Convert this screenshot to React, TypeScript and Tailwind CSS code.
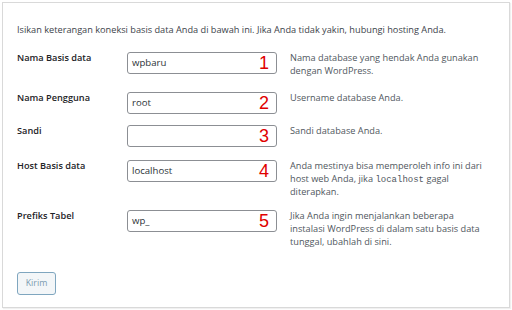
const rows = [
  { label: "Nama Basis data", value: "wpbaru", num: "1", pb: "pb-[14px]", desc: <>Nama database yang hendak Anda gunakan dengan WordPress.</> },
  { label: "Nama Pengguna", value: "root", num: "2", pb: "pb-[10px]", desc: <>Username database Anda.</> },
  { label: "Sandi", value: "", num: "3", pb: "pb-[12px]", desc: <>Sandi database Anda.</> },
  {
    label: "Host Basis data",
    value: "localhost",
    num: "4",
    pb: "pb-[11px]",
    desc: (
      <>
        Anda mestinya bisa memperoleh info ini dari host web Anda, jika{" "}
        <code className="font-['Liberation_Mono',monospace] text-[9px] leading-none">localhost</code> gagal diterapkan.
      </>
    ),
  },
  { label: "Prefiks Tabel", value: "wp_", num: "5", pb: "pb-[20px]", desc: <>Jika Anda ingin menjalankan beberapa instalasi WordPress di dalam satu basis data tunggal, ubahlah di sini.</> },
];

export default function App() {
  return (
    <div className="w-[512px] h-[310px] bg-white p-[2px] font-['Open_Sans',sans-serif]">
      <div className="h-full border border-[#d9d9d9] pl-[14px] pt-[20px] shadow-[1px_1px_1px_rgba(0,0,0,0.06)]">
        <p className="text-[9.2px] leading-[14px] text-[#3c434a]">
          Isikan keterangan koneksi basis data Anda di bawah ini. Jika Anda tidak yakin, hubungi hosting Anda.
        </p>
        <div className="mt-[14px] flex flex-col">
          {rows.map((r) => (
            <div key={r.label} className={`flex items-start ${r.pb}`}>
              <div className="w-[110px] text-[9.2px] leading-[14px] font-semibold text-[#1d2327]">{r.label}</div>
              <div className="relative mt-[1px] w-[150px] h-[22px] rounded-[3px] border border-[#8c8f94] bg-white flex items-center pl-[4px]">
                <span className="text-[9.6px] text-[#2c3338]">{r.value}</span>
                <span className="absolute right-[7px] top-[-1px] text-[18px] leading-[22px] text-[#e00000] font-['Liberation_Sans',sans-serif]">
                  {r.num}
                </span>
              </div>
              <div className="ml-[13px] w-[193px] text-[9.2px] leading-[13px] text-[#50575e]">{r.desc}</div>
            </div>
          ))}
        </div>
        <button className="w-[39px] h-[23px] rounded-[3px] border border-[#7fa6bf] bg-[#f3f6f8] text-[8.8px] text-[#7b9bb0]">
          Kirim
        </button>
      </div>
    </div>
  );
}
